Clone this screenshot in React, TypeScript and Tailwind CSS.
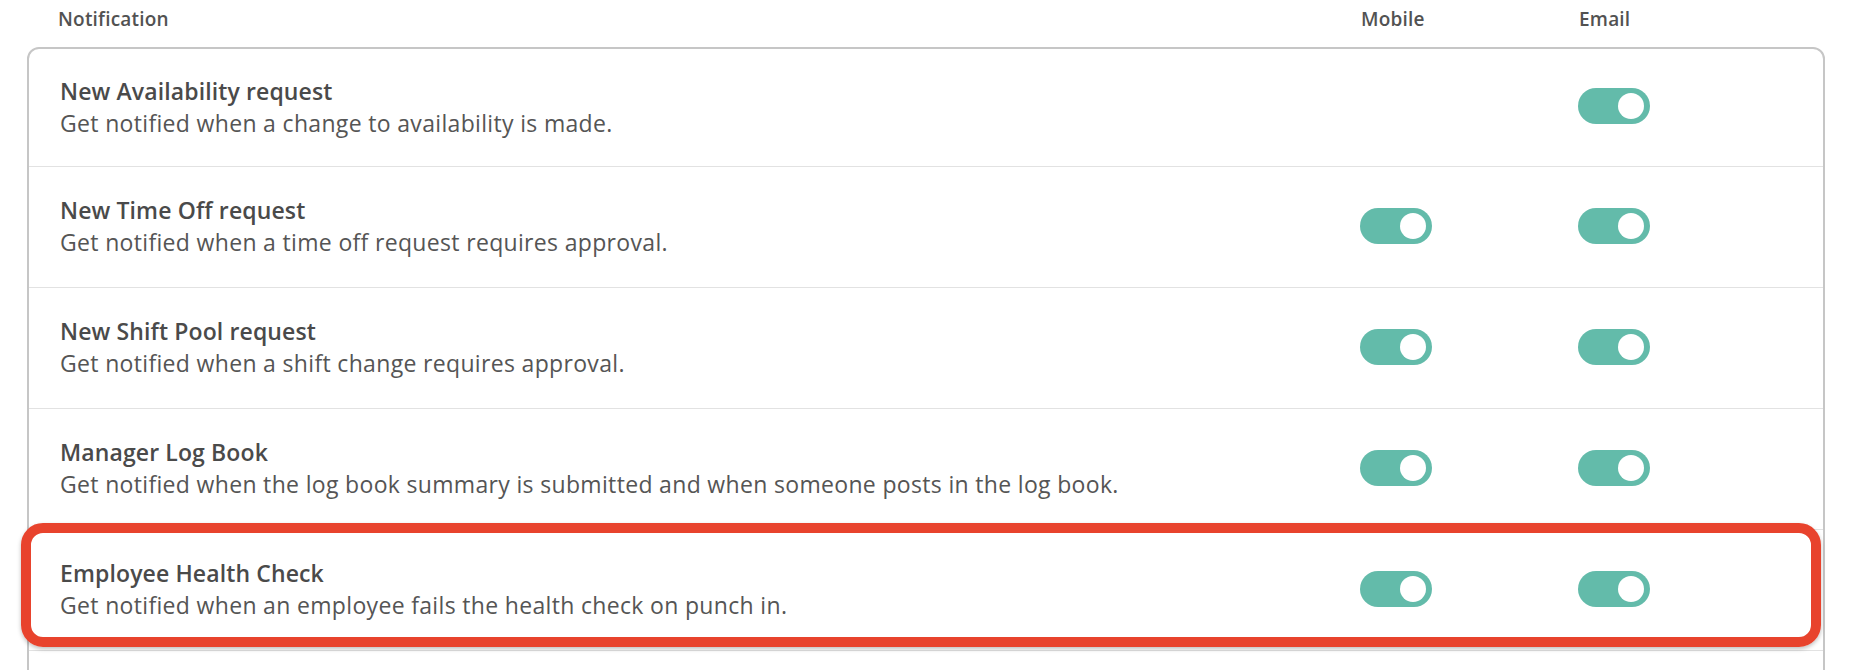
const rows = [
  {
    title: "New Availability request",
    desc: "Get notified when a change to availability is made.",
    mobile: false,
    email: true,
  },
  {
    title: "New Time Off request",
    desc: "Get notified when a time off request requires approval.",
    mobile: true,
    email: true,
  },
  {
    title: "New Shift Pool request",
    desc: "Get notified when a shift change requires approval.",
    mobile: true,
    email: true,
  },
  {
    title: "Manager Log Book",
    desc: "Get notified when the log book summary is submitted and when someone posts in the log book.",
    mobile: true,
    email: true,
  },
  {
    title: "Employee Health Check",
    desc: "Get notified when an employee fails the health check on punch in.",
    mobile: true,
    email: true,
    highlight: true,
  },
];

const Toggle = () => (
  <div className="w-[72px] h-[36px] mb-[3px] ml-[2px] rounded-full bg-[#63bbaa] flex items-center justify-end pr-[6px]">
    <div className="w-[26px] h-[26px] rounded-full bg-white" />
  </div>
);

export default function App() {
  return (
    <div
      className="w-[1856px] h-[670px] overflow-hidden bg-white pl-[27px] pr-[31px]"
      style={{ fontFamily: '"Open Sans", "Liberation Sans", sans-serif' }}
    >
      {/* column headers */}
      <div className="flex h-[47px] pt-[5px] pl-[31px] pr-[29px] text-[19px] font-semibold tracking-[0.2px] text-[#525252]">
        <div className="flex-1">Notification</div>
        <div className="w-[218px] pl-px">Mobile</div>
        <div className="w-[218px] pl-px">Email</div>
      </div>

      <div className="border-2 border-[#c6c6c6] rounded-[12px] h-[700px]">
        {rows.map((r, i) => (
          <div
            key={i}
            className={`relative flex items-center pl-[31px] pr-[29px] border-b border-[#e2e2e2] ${
              i === 0 ? "h-[118px]" : "h-[121px]"
            }`}
          >
            <div className="flex-1 flex flex-col gap-[1px] pb-px">
              <div className="text-[23px] leading-[31px] font-semibold tracking-[0.12px] text-[#4a4a4a]">
                {r.title}
              </div>
              <div className="text-[23px] leading-[31px] tracking-[0.33px] text-[#555555]">
                {r.desc}
              </div>
            </div>
            <div className="w-[218px]">{r.mobile && <Toggle />}</div>
            <div className="w-[218px]">{r.email && <Toggle />}</div>
            {r.highlight && (
              <div className="absolute -left-[8px] -top-[7px] right-[2px] bottom-[3px] border-[10px] border-[#e8432d] rounded-[22px] shadow-[0_2px_4px_rgba(0,0,0,0.25)]" />
            )}
          </div>
        ))}
      </div>
    </div>
  );
}
